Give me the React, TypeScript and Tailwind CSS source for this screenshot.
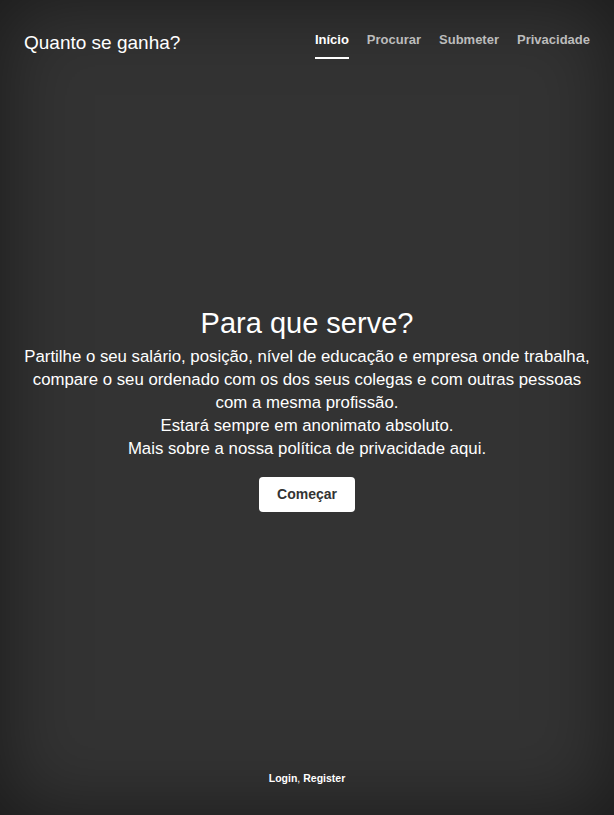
export default function App() {
  const links = ["Início", "Procurar", "Submeter", "Privacidade"];

  return (
    <div className="flex h-[815px] w-full flex-col bg-[#333] px-6 text-white shadow-[inset_0_0_5rem_rgba(0,0,0,0.5)] font-['Liberation_Sans',Arial,sans-serif]">
      <header className="flex items-start justify-between pt-[31px]">
        <h3 className="text-[19px] leading-[23px]">Quanto se ganha?</h3>
        <nav className="flex gap-[18px] pt-[1px]">
          {links.map((l, i) => (
            <a
              key={l}
              href="#"
              className={
                i === 0
                  ? "border-b-2 border-white pb-[9px] text-[13px] font-bold leading-[16px] text-white"
                  : "border-b-2 border-transparent pb-[9px] text-[13px] font-bold leading-[16px] text-[#bcbcbc]"
              }
            >
              {l}
            </a>
          ))}
        </nav>
      </header>

      <main className="flex flex-1 flex-col items-center justify-center pb-[14px] text-center">
        <h1 className="text-[29px] leading-[34px]">Para que serve?</h1>
        <p className="mt-[5px] text-[16.8px] leading-[23px]">
          Partilhe o seu salário, posição, nível de educação e empresa onde trabalha,
          <br />
          compare o seu ordenado com os dos seus colegas e com outras pessoas
          <br />
          com a mesma profissão.
          <br />
          Estará sempre em anonimato absoluto.
          <br />
          Mais sobre a nossa política de privacidade aqui.
        </p>
        <button className="mt-[17px] h-[35px] rounded-[4px] bg-white px-[18px] text-[14px] font-bold text-[#333]">
          Começar
        </button>
      </main>

      <footer className="pb-[30px] text-center text-[10.5px] leading-[13px]">
        <a href="#" className="font-bold text-white">Login</a>,{" "}
        <a href="#" className="font-bold text-white">Register</a>
      </footer>
    </div>
  );
}
